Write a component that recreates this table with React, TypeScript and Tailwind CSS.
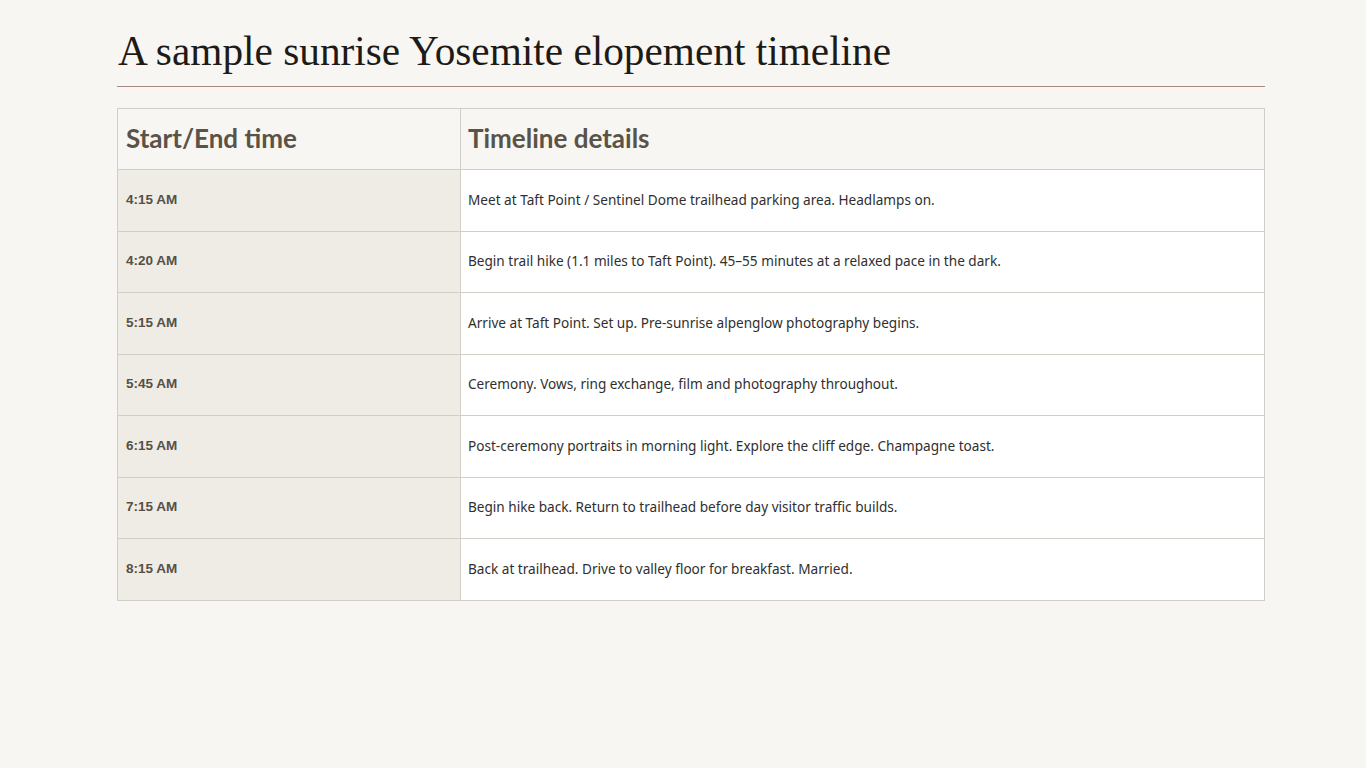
const rows = [
  { time: '4:15 AM', detail: 'Meet at Taft Point / Sentinel Dome trailhead parking area. Headlamps on.' },
  { time: '4:20 AM', detail: 'Begin trail hike (1.1 miles to Taft Point). 45–55 minutes at a relaxed pace in the dark.' },
  { time: '5:15 AM', detail: 'Arrive at Taft Point. Set up. Pre-sunrise alpenglow photography begins.' },
  { time: '5:45 AM', detail: 'Ceremony. Vows, ring exchange, film and photography throughout.' },
  { time: '6:15 AM', detail: 'Post-ceremony portraits in morning light. Explore the cliff edge. Champagne toast.' },
  { time: '7:15 AM', detail: 'Begin hike back. Return to trailhead before day visitor traffic builds.' },
  { time: '8:15 AM', detail: 'Back at trailhead. Drive to valley floor for breakfast. Married.' },
];

export default function App() {
  return (
    <div className="min-h-[768px] w-full bg-[#f8f6f2] pl-[117px] pr-[101px] pt-[24px]">
      <h1 className="border-b border-[#a58b84] pb-[8px] pl-[1px] font-['Liberation_Serif',serif] text-[41.3px] leading-[54px] text-[#1e1a16]">
        A sample sunrise Yosemite elopement timeline
      </h1>

      <table className="mt-[21px] w-full border-collapse border border-[#d2cec7]">
        <thead>
          <tr className="h-[61px] bg-[#f8f6f2]">
            <th className="w-[343px] border border-[#d2cec7] px-[8px] pb-[2px] text-left font-['Lato',sans-serif] text-[26px] font-bold text-[#5a5347]">
              Start/End time
            </th>
            <th className="border border-[#d2cec7] px-[7px] pb-[2px] text-left font-['Lato',sans-serif] text-[26px] font-bold text-[#5a5347]">
              Timeline details
            </th>
          </tr>
        </thead>
        <tbody>
          {rows.map((r) => (
            <tr key={r.time} className="h-[61.5px]">
              <td className="border border-[#d2cec7] bg-[#efebe5] px-[8px] pb-[1px] font-['Liberation_Sans',sans-serif] text-[13.5px] font-bold text-[#555044]">
                {r.time}
              </td>
              <td className="border border-[#d2cec7] bg-white px-[7px] pb-[1px] font-['Noto_Sans',sans-serif] text-[13.6px] text-[#2f2f2f]">
                {r.detail}
              </td>
            </tr>
          ))}
        </tbody>
      </table>
    </div>
  );
}
